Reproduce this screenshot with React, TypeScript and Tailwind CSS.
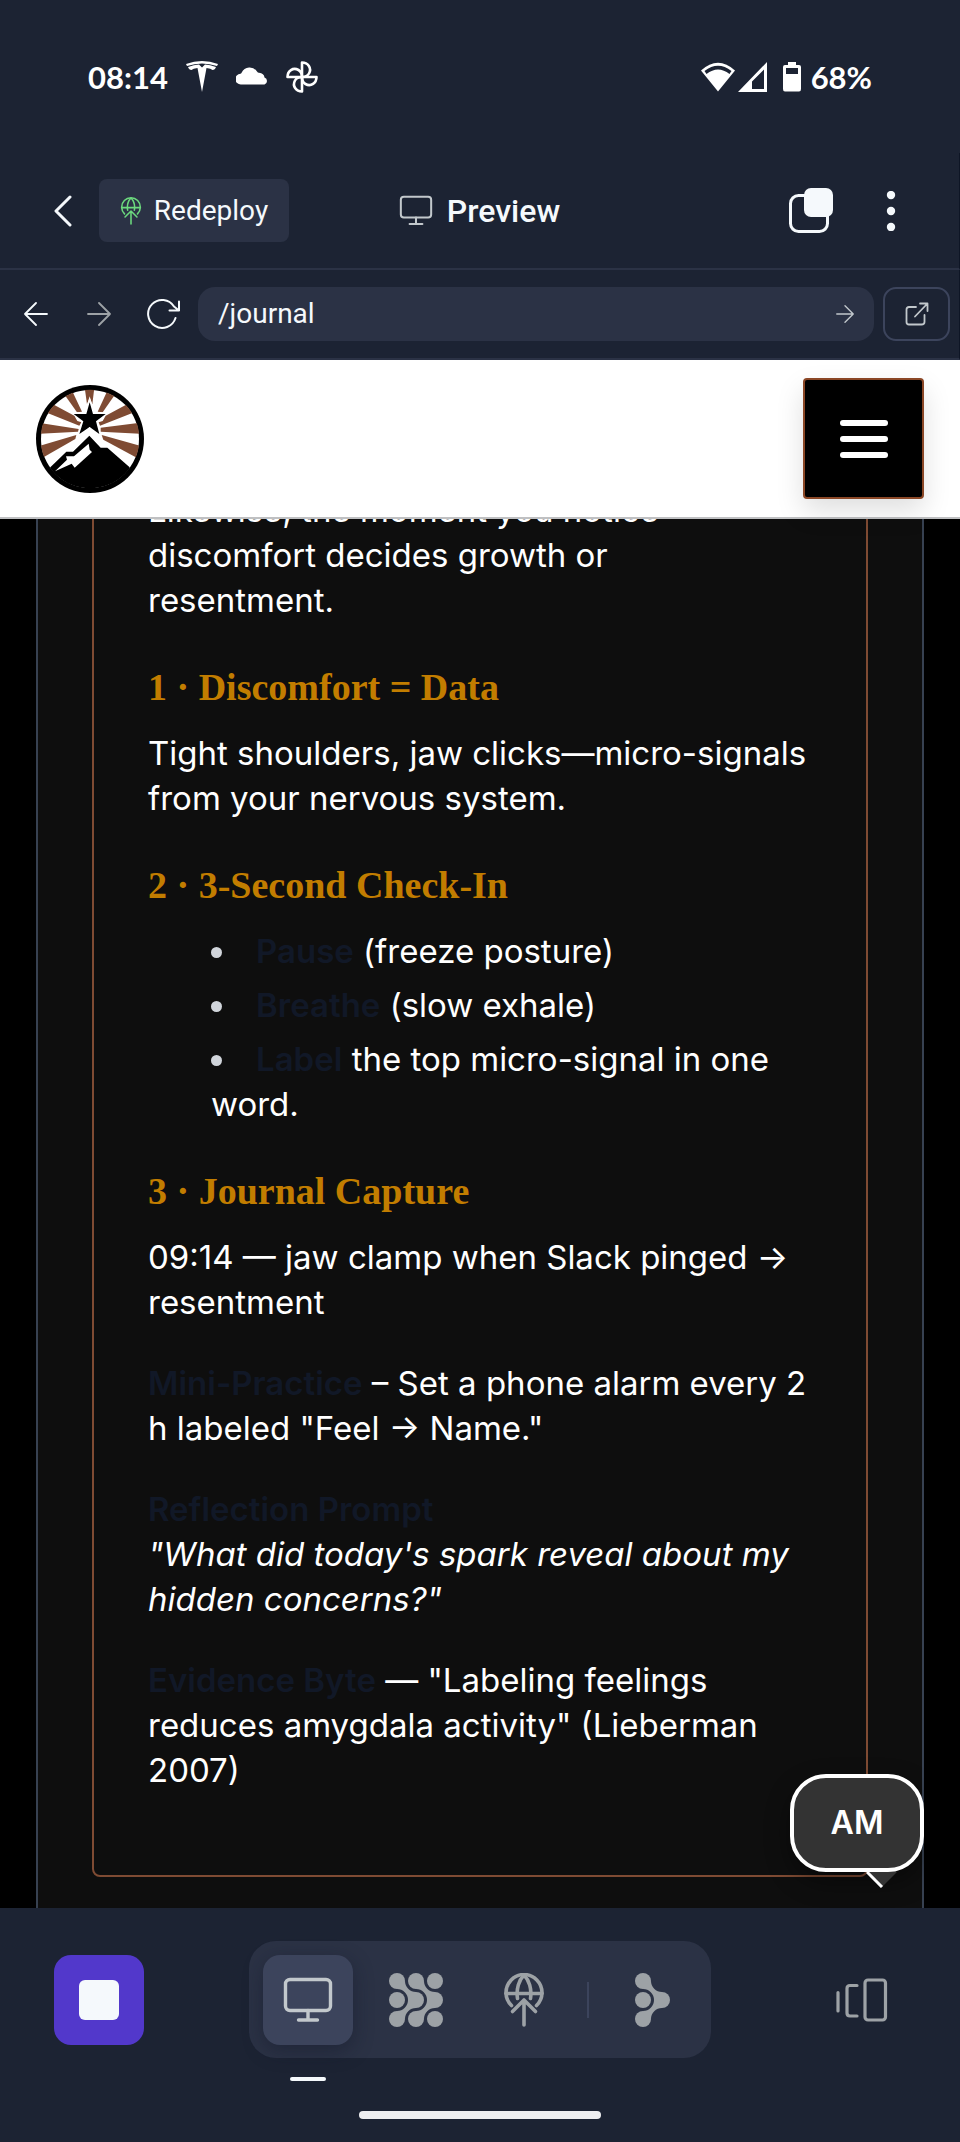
import React from 'react';

const dim = '#9DA2A6';

function DeployIcon({ className, color, width = 1.5 }: { className?: string; color: string; width?: number }) {
  return (
    <svg className={className} viewBox="0 0 40 54" fill="none" stroke={color} strokeWidth={width} strokeLinecap="round" strokeLinejoin="round" aria-hidden="true">
      <path d="M7.5 32.5A18 18 0 1 1 32.5 32.5" />
      <path d="M2 20.500H38" />
      <path d="M13.500 25.500C12 16 15 7 20 2C25 7 28 16 26.500 25.500" />
      <path d="M8.500 38.500L20 27L31.500 38.500M20 27V52" />
    </svg>
  );
}

function MonitorIcon({ className, color, width }: { className?: string; color: string; width: number }) {
  return (
    <svg className={className} viewBox="0 0 50 46" fill="none" stroke={color} strokeWidth={width} strokeLinecap="round" strokeLinejoin="round" aria-hidden="true">
      <rect x="2.500" y="2.500" width="45" height="31" rx="4.500" />
      <path d="M25 33.500V43M15.500 43H34.500" />
    </svg>
  );
}

function Arrow({ className, color, flip = false }: { className?: string; color: string; flip?: boolean }) {
  return (
    <svg className={className} viewBox="0 0 24 24" fill="none" stroke={color} strokeWidth="1.800" strokeLinecap="round" strokeLinejoin="round" aria-hidden="true">
      {flip ? <path d="M23 12H1M12 1L1 12L12 23" /> : <path d="M1 12H23M12 1L23 12L12 23" />}
    </svg>
  );
}

function StatusBar() {
  return (
    <div className="flex h-[153px] items-start justify-between px-[88px] pt-[61px] text-white">
      <div className="flex h-8 items-center">
        <span className="font-['Lato',sans-serif] text-[31px] leading-8 font-bold">08:14</span>
        <svg className="ml-[18px] h-8 w-8" viewBox="0 0 32 32" fill="#fff" aria-hidden="true">
          <path d="M0 3Q16 -3 32 3L31 5Q16 0 1 5Z" />
          <path d="M2 6Q8 3.500 13 3.500L16 6.500L19 3.500Q24 3.500 30 6Q29 9 26.500 9Q25 7.500 20.500 7L16 31L11.500 7Q7 7.500 5.500 9Q3 9 2 6Z" />
        </svg>
        <svg className="ml-[18px] h-8 w-8" viewBox="0 0 32 32" fill="#fff" aria-hidden="true">
          <path d="M5 23.500A5.400 5.400 0 0 1 4.500 12.700Q5.500 12.500 5.700 11.500A8.700 8.700 0 0 1 21 10.500Q22 12 23 11.800Q28 12.300 28.500 16.500A3.700 3.700 0 0 1 28.500 23.500Z" />
        </svg>
        <svg className="ml-[18px] h-8 w-8" viewBox="0 0 32 32" fill="none" stroke="#fff" strokeWidth="2.600" strokeLinejoin="round" aria-hidden="true">
          <path d="M16 16V1.500C22 1.500 26 7 23 12.500Q21 16 16 16Z" />
          <path d="M16 16H30.500C30.500 22 25 26 19.500 23Q16 21 16 16Z" />
          <path d="M16 16V30.500C10 30.500 6 25 9 19.500Q11 16 16 16Z" />
          <path d="M16 16H1.500C1.500 10 7 6 12.500 9Q16 11 16 16Z" />
        </svg>
      </div>
      <div className="flex h-8 items-center">
        <svg className="h-[30px] w-[34px]" viewBox="0 0 34 30" aria-hidden="true">
          <path d="M0 8.500Q17 -7 34 8.500L17 29.500Z" fill="#fff" />
          <path d="M3.500 9Q17 -1.500 30.500 9L28.500 12Q17 3 5.500 12Z" fill="#1C2333" />
        </svg>
        <svg className="ml-[3px] h-[30px] w-[29px]" viewBox="0 0 29 30" fill="#fff" fillRule="evenodd" aria-hidden="true">
          <path d="M29 0V30H0ZM26 7.500L14 19.500V27H26Z" />
        </svg>
        <svg className="ml-[16px] h-[30px] w-[18px]" viewBox="0 0 18 30" fill="#fff" fillRule="evenodd" aria-hidden="true">
          <path d="M5 0H13V3H16Q18 3 18 5V27Q18 29.500 16 29.500H2Q0 29.500 0 27V5Q0 3 2 3H5ZM3 6V12H15V6Z" />
        </svg>
        <span className="ml-[10px] font-['Lato',sans-serif] text-[31px] leading-8 font-bold">68%</span>
      </div>
    </div>
  );
}

function Toolbar() {
  return (
    <header className="flex h-[117px] items-center justify-between border-r border-b-2 border-r-[#0E1525] border-b-[#2B3245] pr-[53px] pl-[53px]">
      <div className="flex flex-1 items-center gap-[26px]">
        <button type="button" aria-label="Back">
          <svg className="h-[32px] w-[20px]" viewBox="0 0 20 32" fill="none" stroke="#F5F9FC" strokeWidth="3" strokeLinecap="round" strokeLinejoin="round" aria-hidden="true">
            <path d="M17 2L3 16L17 30" />
          </svg>
        </button>
        <button type="button" className="flex h-[63px] w-[190px] items-center justify-center gap-[12px] rounded-lg bg-[#2B3245] text-[28px] text-[#F5F9FC]">
          <DeployIcon className="h-[28px] w-[22px]" color="#6CD97E" width={3} />
          Redeploy
        </button>
      </div>
      <div className="flex items-center gap-[14px]">
        <MonitorIcon className="h-[31px] w-[34px]" color="#C2C8CC" width={3} />
        <h1 className="text-[32px] font-medium text-[#F5F9FC]">Preview</h1>
      </div>
      <div className="flex flex-1 items-center justify-end gap-[42px]">
        <button type="button" aria-label="Tabs">
          <svg className="h-[46px] w-[46px]" viewBox="0 0 46 46" fill="none" aria-hidden="true">
            <rect x="2.500" y="7.500" width="37" height="36" rx="8" stroke="#F5F9FC" strokeWidth="3" />
            <rect x="16" y="0" width="29" height="29" rx="7" fill="#F5F9FC" />
          </svg>
        </button>
        <button type="button" aria-label="More options" className="px-[10px]">
          <svg className="h-[40px] w-[10px]" viewBox="0 0 10 40" fill="#F5F9FC" aria-hidden="true">
            <circle cx="5" cy="4" r="4.200" />
            <circle cx="5" cy="20" r="4.200" />
            <circle cx="5" cy="36" r="4.200" />
          </svg>
        </button>
      </div>
    </header>
  );
}

function AddressBar() {
  return (
    <nav className="flex h-[90px] items-center border-r border-b-2 border-r-[#0E1525] border-b-[#2B3245] pr-[9px] pl-[24px]">
      <button type="button" aria-label="Go back">
        <Arrow className="size-[24px]" color="#F5F9FC" flip />
      </button>
      <button type="button" aria-label="Go forward" className="ml-[39px]">
        <Arrow className="size-[24px]" color={dim} />
      </button>
      <button type="button" aria-label="Reload" className="ml-[36px]">
        <svg className="h-[32px] w-[34px]" viewBox="0 0 34 32" fill="none" stroke="#F5F9FC" strokeWidth="2" strokeLinecap="round" strokeLinejoin="round" aria-hidden="true">
          <path d="M28.500 20A14 14 0 1 1 27 8.500L32 12.500M32 3.500V12.500H22.500" />
        </svg>
      </button>
      <div className="ml-[17px] flex h-[54px] flex-1 items-center rounded-[17px] bg-[#2B3245] pr-[20px] pl-[20px]">
        <input aria-label="Path" defaultValue="/journal" className="min-w-0 flex-1 bg-transparent text-[28px] text-[#F5F9FC] outline-none" />
        <button type="button" aria-label="Go">
          <Arrow className="size-[18px]" color="#C2C8CC" />
        </button>
      </div>
      <button type="button" aria-label="Open in new tab" className="ml-[9px] flex h-[54px] w-[67px] items-center justify-center rounded-[13px] border-2 border-[#3C445C]">
        <svg className="size-[24px]" viewBox="0 0 24 24" fill="none" stroke="#C2C8CC" strokeWidth="1.800" strokeLinecap="round" strokeLinejoin="round" aria-hidden="true">
          <path d="M11 5H4Q1.500 5 1.500 7.500V20Q1.500 22.500 4 22.500H16.500Q19.500 22.500 19.500 20V13M10 14.500L22.500 1.500M15 1.500H22.500V9" />
        </svg>
      </button>
    </nav>
  );
}

function Logo() {
  return (
    <svg className="size-[108px]" viewBox="0 0 324 324" aria-label="Summit star" role="img">
      <defs>
        <clipPath id="disc">
          <circle cx="162" cy="162" r="148" />
        </clipPath>
      </defs>
      <circle cx="162" cy="162" r="162" fill="#000" />
      <circle cx="162" cy="162" r="147" fill="#fff" />
      <g clipPath="url(#disc)">
        <g fill="#7F4B33">
          <path d="M145 0L153 58L161 38L169 58L176 0Z" />
          <path d="M65 0L123 82L138 80L100 0Z" />
          <path d="M257 0L200 82L185 80L222 0Z" />
          <path d="M20 35L55 60L115 92L124 108L136 112L130 122L0 70Z" />
          <path d="M304 35L269 60L209 92L200 108L188 112L192 122L324 70Z" />
          <path d="M0 112L128 132L126 140L0 147Z" />
          <path d="M324 112L194 128L194 140L324 147Z" />
          <path d="M0 186L121 150L118 162L0 230Z" />
          <path d="M324 186L197 150L202 164L324 230Z" />
        </g>
        <path d="M161 34L176 82H218L184 106L196 154L161 126L126 154L138 106L104 82H146Z" fill="#fff" />
        <path d="M161 52L171 87H209L180 109L190 147L161 126L130 147L142 109L113 87H151Z" fill="#000" />
        <path d="M161 126L118 167L92 193L40 250H284L222 186H202Z" fill="#fff" />
        <path d="M43 247L91 200H111L160 152L194 188H214L280 246L324 324H0Z" fill="#000" />
        <path d="M158 176L161 194L168 201L116 248L107 236L57 259L93 224L90 214H114L158 176Z" fill="#fff" />
      </g>
    </svg>
  );
}

function SiteHeader() {
  return (
    <div className="relative z-10 flex h-[159px] items-center justify-between border-b-2 border-[#BFC0C2] bg-white px-[36px]">
      <a href="#home" aria-label="Home">
        <Logo />
      </a>
      <button type="button" aria-label="Menu" className="flex size-[121px] flex-col items-center justify-center gap-[10px] rounded-[4px] border-2 border-[#8B4726] bg-black shadow-[0_12px_28px_rgba(0,0,0,0.13)]">
        <span className="h-[6px] w-[48px] rounded-full bg-white" />
        <span className="h-[6px] w-[48px] rounded-full bg-white" />
        <span className="h-[6px] w-[48px] rounded-full bg-white" />
      </button>
    </div>
  );
}

function Heading({ children }: { children: React.ReactNode }) {
  return <h2 className="mt-[42px] mb-[21px] font-['Liberation_Serif',serif] text-[38px] leading-[45px] font-bold text-[#C27D00]">{children}</h2>;
}

function Term({ children }: { children: React.ReactNode }) {
  return <strong className="font-semibold text-[#111827]">{children}</strong>;
}

function Article() {
  return (
    <main className="relative flex-1 bg-black px-[36px]">
      <div className="overflow-hidden border-x-2 border-[#374151] bg-[#0E0E0E] px-[54px] pb-[31px]">
        <article className="-mt-[36px] rounded-lg border-2 border-[#7F4B33] px-[54px] pb-[82px] text-[33px] leading-[45px] text-white">
          <p className="mt-[3px]">
            Likewise, the moment you notice
            <br />
            discomfort decides growth or
            <br />
            resentment.
          </p>
          <Heading>1 · Discomfort = Data</Heading>
          <p>Tight shoulders, jaw clicks—micro-signals from your nervous system.</p>
          <Heading>2 · 3-Second Check-In</Heading>
          <ul className="flex list-inside list-disc flex-col gap-[9px] pl-[63px] marker:text-[#D1D5DB]">
            <li>
              <Term>Pause</Term> (freeze posture)
            </li>
            <li>
              <Term>Breathe</Term> (slow exhale)
            </li>
            <li>
              <Term>Label</Term> the top micro-signal in one word.
            </li>
          </ul>
          <Heading>3 · Journal Capture</Heading>
          <p>09:14 — jaw clamp when Slack pinged → resentment</p>
          <p className="mt-[36px]">
            <Term>Mini-Practice</Term> – Set a phone alarm every 2 h labeled "Feel → Name."
          </p>
          <p className="mt-[36px]">
            <Term>Reflection Prompt</Term>
            <br />
            <em>"What did today's spark reveal about my hidden concerns?"</em>
          </p>
          <p className="mt-[36px]">
            <Term>Evidence Byte</Term> — "Labeling feelings reduces amygdala activity" (Lieberman 2007)
          </p>
        </article>
      </div>
      <button type="button" className="absolute right-[36px] bottom-[36px] flex h-[98px] w-[134px] items-center justify-center rounded-[36px] border-4 border-white bg-[#333] text-[32px] font-semibold text-white shadow-[0_10px_24px_rgba(0,0,0,0.4)]">
        AM
        <svg className="absolute top-[94px] left-[72px] h-[16px] w-[32px]" viewBox="0 0 32 16" aria-hidden="true">
          <path d="M1 0H31L16 15Z" fill="#333" />
          <path d="M1 0L16 15" stroke="#fff" strokeWidth="3" />
        </svg>
      </button>
    </main>
  );
}

function BottomBar() {
  return (
    <footer className="flex flex-col pb-[23px]">
      <div className="flex items-center px-[54px] pt-[33px]">
        <div className="flex flex-1">
          <button type="button" aria-label="Stop" className="flex size-[90px] items-center justify-center rounded-[17px] bg-[#5238CB]">
            <span className="size-[40px] rounded-[6px] bg-[#F5F9FC]" />
          </button>
        </div>
        <div className="flex h-[117px] w-[462px] items-center rounded-[27px] bg-[#2B3245] pl-[14px]">
          <button type="button" aria-label="Preview" className="relative flex size-[90px] items-center justify-center rounded-[17px] bg-[#3C445C] shadow-[0_6px_20px_rgba(14,21,37,0.4)]">
            <MonitorIcon className="h-[46px] w-[50px]" color="#C2C8CC" width={3.4} />
            <span className="absolute top-[122px] h-[4px] w-[36px] rounded-full bg-[#F5F9FC]" />
          </button>
          <button type="button" aria-label="Agent" className="ml-[36px]">
            <svg className="size-[54px]" viewBox="0 0 54 54" fill={dim} aria-hidden="true">
              <circle cx="8" cy="8" r="8" />
              <circle cx="27" cy="8" r="8" />
              <circle cx="46" cy="8" r="8" />
              <circle cx="8" cy="27" r="8" />
              <circle cx="27" cy="27" r="8" />
              <circle cx="46" cy="27" r="8" />
              <circle cx="8" cy="46" r="8" />
              <circle cx="27" cy="46" r="8" />
              <circle cx="46" cy="46" r="8" />
              <path d="M16 8A11 11 0 0 0 27 19V35A11 11 0 0 0 16 46L8 38A11 11 0 0 0 8 16Z" />
              <path d="M35 8A11 11 0 0 0 46 19V35A11 11 0 0 0 35 46L27 38A11 11 0 0 0 27 16Z" />
            </svg>
          </button>
          <button type="button" aria-label="Deploy" className="ml-[61px]">
            <DeployIcon className="h-[54px] w-[40px]" color={dim} width={3.6} />
          </button>
          <span className="ml-[43px] h-[36px] w-[2px] bg-[#3C445C]" />
          <button type="button" aria-label="Assistant" className="ml-[46px]">
            <svg className="h-[54px] w-[35px]" viewBox="0 0 35 54" fill={dim} aria-hidden="true">
              <circle cx="8" cy="8" r="8" />
              <circle cx="8" cy="27" r="8" />
              <circle cx="8" cy="46" r="8" />
              <circle cx="27" cy="27" r="8" />
              <path d="M16 8A11 11 0 0 0 27 19V35A11 11 0 0 0 16 46L8 38A11 11 0 0 0 8 16Z" />
            </svg>
          </button>
        </div>
        <div className="flex flex-1 justify-end">
          <button type="button" aria-label="Switch tabs" className="mr-[18px]">
            <svg className="h-[44px] w-[52px]" viewBox="0 0 52 44" fill="none" stroke={dim} strokeWidth="3.200" strokeLinecap="round" strokeLinejoin="round" aria-hidden="true">
              <path d="M2 14.500V33M21 7.500H14Q11 7.500 11 10.500V35Q11 38 14 38H21" />
              <rect x="29" y="2" width="20.500" height="40" rx="3" />
            </svg>
          </button>
        </div>
      </div>
      <div className="mx-auto mt-[53px] h-[8px] w-[242px] rounded-full bg-[#EEEFF1]" />
    </footer>
  );
}

export default function App() {
  return (
    <div className="flex min-h-screen flex-col bg-[#1C2333] font-['Inter',sans-serif]">
      <StatusBar />
      <div className="font-['Roboto',sans-serif]">
        <Toolbar />
        <AddressBar />
      </div>
      <SiteHeader />
      <Article />
      <BottomBar />
    </div>
  );
}
